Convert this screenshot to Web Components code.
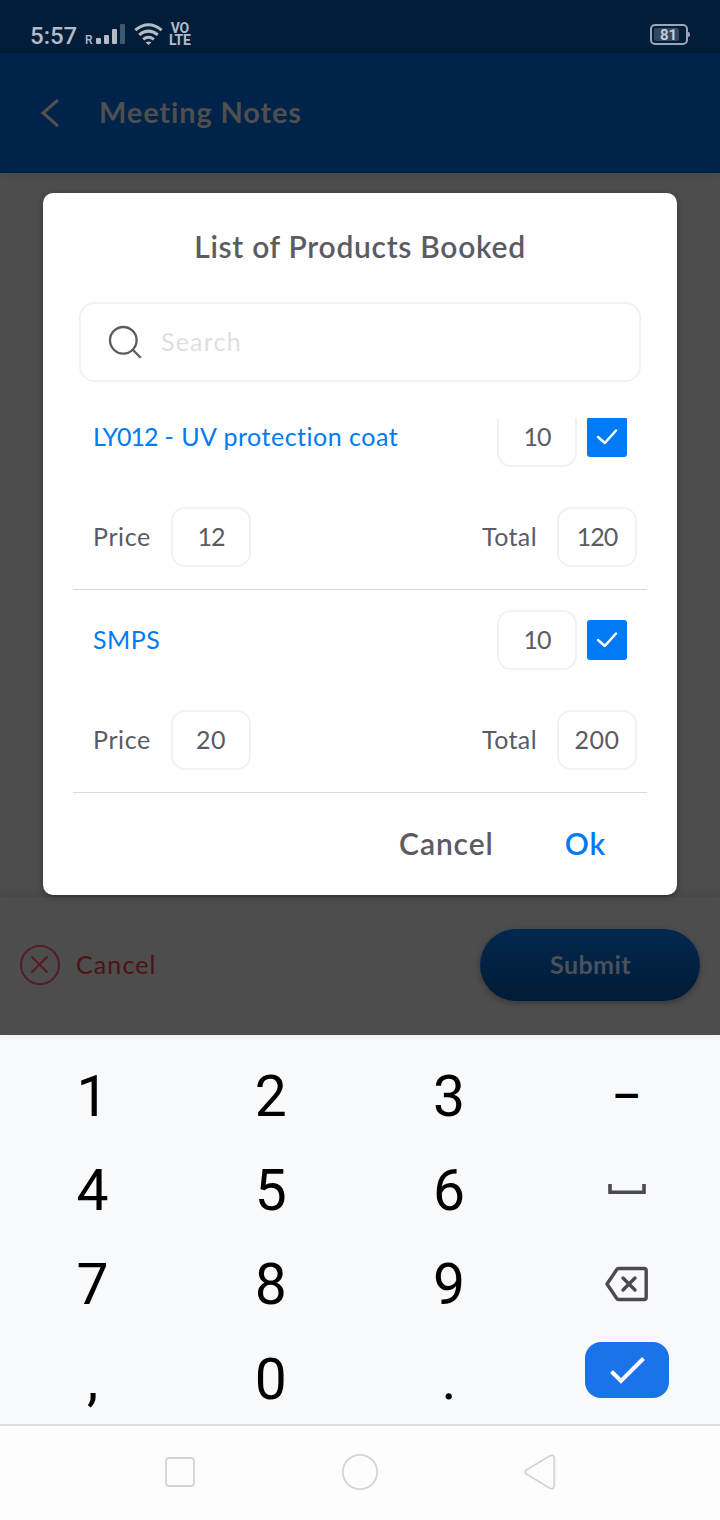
<!DOCTYPE html>
<html lang="en">
<head>
<meta charset="UTF-8">
<title>Meeting Notes</title>
<style>
  html, body {
    margin: 0;
    width: 720px;
    height: 1520px;
    overflow: hidden;
  }
  body {
    font-family: Lato, "Open Sans", sans-serif;
    --text: #5b5b64;
    --blue: #007af5;
    --line: #f2f2f3;
  }
</style>
</head>
<body>
<meeting-screen></meeting-screen>

<script>
/* shared helper : clone a template into an open shadow root */
function define(name, html) {
  const template = document.createElement('template');
  template.innerHTML = html;

  class Component extends HTMLElement {
    constructor() {
      super();
      this.attachShadow({ mode: 'open' });
      this.shadowRoot.appendChild(template.content.cloneNode(true));
    }
  }

  if (!customElements.get(name)) {
    customElements.define(name, Component);
  }
}

/* status bar : clock, signal, wifi, volte, battery */
define('status-bar', `
  <style>
    :host {
      display: flex;
      align-items: flex-start;
      justify-content: space-between;
      height: 53px;
      box-sizing: border-box;
      padding: 20px 30px 0 30px;
      background: #011d3a;
      color: #b3bbc4;
      font-family: Roboto, sans-serif;
    }
    .left { display: flex; }
    .clock { width: 55px; padding-top: 1px; font-size: 24px; line-height: 31px; font-weight: 500; }
    svg { display: block; }
    .r { width: 11px; padding-top: 13px; font-size: 12px; line-height: 14px; font-weight: 500; }
    .wifi { margin: 2px 0 0 8px; }
    .volte {
      margin: 2px 0 0 6px;
      font-size: 14px;
      line-height: 12px;
      font-weight: 700;
      text-align: center;
      letter-spacing: -0.4px;
    }
    .volte div { height: 12px; }
    .battery {
      display: flex;
      align-items: center;
      margin-top: 4px;
    }
    .cell {
      width: 38px;
      height: 21px;
      box-sizing: border-box;
      border: 2px solid #9aa6b5;
      border-radius: 5px;
      padding: 2px;
    }
    .level {
      width: 25px;
      height: 13px;
      padding-left: 6px;
      border-radius: 2px;
      background: #344960;
      font-size: 15px;
      line-height: 15px;
      font-weight: 700;
      color: #c5ccd3;
      box-sizing: border-box;
      white-space: nowrap;
    }
    .tip { width: 2px; height: 5px; background: #9aa6b5; border-radius: 0 2px 2px 0; }
  </style>
  <div class="left">
    <div class="clock">5:57</div>
    <div class="r">R</div>
    <svg width="30" height="26" viewBox="0 0 30 26">
      <g fill="#b3bbc4">
        <rect x="0" y="18" width="5" height="6" rx="1"/>
        <rect x="8" y="15" width="5" height="9" rx="1"/>
        <rect x="16" y="9" width="5" height="15" rx="1"/>
        <rect x="24" y="4" width="5" height="20" rx="1" fill="#415871"/>
      </g>
    </svg>
    <svg class="wifi" width="29" height="24" viewBox="0 0 29 24" fill="none" stroke="#b3bbc4" stroke-width="3">
      <path d="M1.3 8.2Q14.5-2.6 27.7 8.2"/>
      <path d="M5.2 12.9Q14.5 5.3 23.8 12.9"/>
      <path d="M9.1 17.4Q14.5 13.2 19.9 17.4"/>
      <path d="M14.5 23L11.6 20.4Q14.5 18.4 17.4 20.4Z" fill="#b3bbc4" stroke="none"/>
    </svg>
    <div class="volte"><div>VO</div><div>LTE</div></div>
  </div>
  <div class="battery">
    <div class="cell"><div class="level">81</div></div>
    <div class="tip"></div>
  </div>
`);

/* app header : back button + page title */
define('app-header', `
  <style>
    :host {
      display: flex;
      align-items: center;
      height: 120px;
      box-sizing: border-box;
      padding: 0 0 0 39px;
      background: #002349;
      color: #504f50;
      box-shadow: 0 1px 6px rgba(0, 0, 0, .12);
    }
    .title {
      margin: -3px 0 0 37px;
      font-size: 29px;
      line-height: 36px;
      font-weight: 700;
      letter-spacing: 0.85px;
    }
  </style>
  <svg width="23" height="30" viewBox="0 0 23 30" fill="none" stroke="#55504c" stroke-width="3">
    <path d="M19 2L4 15L19 28"/>
  </svg>
  <div class="title"><slot></slot></div>
`);

/* footer under the dialog : cancel / submit */
define('action-bar', `
  <style>
    :host {
      display: flex;
      align-items: center;
      justify-content: space-between;
      height: 138px;
      box-sizing: border-box;
      padding: 0 20px 2px;
      background: #4d4d4d;
      box-shadow: 0 -2px 10px rgba(0, 0, 0, .1);
    }
    .cancel {
      display: flex;
      align-items: center;
      gap: 16px;
      color: #4d1213;
      font-size: 25px;
      line-height: 32px;
      letter-spacing: 1.1px;
    }
    .cancel span { padding-bottom: 2px; }
    .submit {
      width: 220px;
      height: 72px;
      border-radius: 36px;
      background: linear-gradient(#03284f, #001b36);
      box-shadow: 0 2px 6px rgba(0, 0, 0, .3);
      color: #4b5159;
      font-size: 25px;
      line-height: 71px;
      font-weight: 700;
      letter-spacing: 0.4px;
      text-indent: 1px;
      text-align: center;
    }
  </style>
  <div class="cancel">
    <svg width="40" height="40" viewBox="0 0 40 40" fill="none" stroke="#561b26" stroke-width="2">
      <circle cx="20" cy="20" r="19"/>
      <path d="M12 12L27 27M27 12L12 27" stroke-linecap="round"/>
    </svg>
    <span>Cancel</span>
  </div>
  <div class="submit">Submit</div>
`);

/* search field */
define('search-box', `
  <style>
    :host {
      display: flex;
      align-items: center;
      height: 80px;
      box-sizing: border-box;
      padding-left: 26px;
      gap: 18px;
      border: 2px solid var(--line);
      border-radius: 16px;
      color: #dfdfe0;
      font-size: 25px;
      line-height: 32px;
      letter-spacing: 1.2px;
    }
    span { padding-bottom: 2px; }
  </style>
  <svg width="36" height="36" viewBox="0 0 36 36" fill="none" stroke="#5b5b64" stroke-width="2.3">
    <circle cx="16.3" cy="16.3" r="13.3"/>
    <path d="M25.5 25.5L33.7 33.7"/>
  </svg>
  <span><slot></slot></span>
`);

/* small bordered number field */
define('number-box', `
  <style>
    :host {
      display: block;
      width: 80px;
      height: 60px;
      box-sizing: border-box;
      border: 2px solid var(--line);
      border-radius: 14px;
      line-height: 55px;
      text-align: center;
    }
  </style>
  <slot></slot>
`);

/* checked checkbox */
define('check-box', `
  <style>
    :host {
      display: block;
      width: 40px;
      height: 40px;
      border-radius: 3px;
      background: var(--blue);
    }
    svg { display: block; }
  </style>
  <svg width="40" height="40" viewBox="0 0 40 40" fill="none" stroke="#fff" stroke-width="2.5" stroke-linecap="round" stroke-linejoin="round">
    <path d="M11 20L17.8 26L29 13.5"/>
  </svg>
`);

/* one product : name / quantity / checkbox, price / total */
define('product-item', `
  <style>
    :host {
      display: block;
      flex: none;
      height: 203px;
      box-sizing: border-box;
      padding-top: 20px;
      border-bottom: 1px solid #dadadb;
      color: var(--text);
      font-size: 25px;
      line-height: 32px;
      letter-spacing: 0.5px;
    }
    .row {
      display: flex;
      align-items: center;
      height: 60px;
      padding: 0 20px;
    }
    .name { flex: 1; padding-bottom: 2px; color: var(--blue); }
    check-box { margin-left: 10px; }
    .sum { margin-top: 40px; padding-right: 10px; }
    .price { width: 78px; padding-bottom: 2px; letter-spacing: 0.6px; }
    .total { margin: 0 20px 0 auto; padding-bottom: 2px; letter-spacing: 0.4px; }
  </style>
  <div class="row">
    <div class="name"><slot name="name"></slot></div>
    <number-box><slot name="qty"></slot></number-box>
    <check-box></check-box>
  </div>
  <div class="row sum">
    <div class="price">Price</div>
    <number-box><slot name="price"></slot></number-box>
    <div class="total">Total</div>
    <number-box><slot name="total"></slot></number-box>
  </div>
`);

/* dialog with the booked products, list is scrolled to its end */
define('product-dialog', `
  <style>
    :host {
      display: flex;
      flex-direction: column;
      width: 634px;
      height: 702px;
      box-sizing: border-box;
      padding: 0 30px;
      border-radius: 10px;
      background: #fff;
      box-shadow: 0 2px 6px rgba(0, 0, 0, .35);
      color: var(--text);
    }
    .title {
      padding: 35px 0 38px;
      font-size: 30px;
      line-height: 36px;
      font-weight: 600;
      letter-spacing: 0.7px;
      text-align: center;
    }
    search-box { margin: 0 6px; }
    .list {
      display: flex;
      flex-direction: column;
      justify-content: flex-end;
      height: 375px;
      margin-top: 36px;
      overflow: hidden;
    }
    .tight { letter-spacing: -1px; }
    .buttons {
      display: flex;
      justify-content: flex-end;
      gap: 71px;
      padding: 32px 41px 0 0;
      font-size: 30px;
      line-height: 36px;
      font-weight: 600;
      letter-spacing: 0.9px;
    }
    .ok { color: var(--blue); }
  </style>
  <div class="title">List of Products Booked</div>
  <search-box>Search</search-box>
  <div class="list">
    <product-item>
      <span slot="name"><span class="tight">LY012</span> - UV protection coat</span>
      <span slot="qty" class="tight">10</span>
      <span slot="price" class="tight">12</span>
      <span slot="total" class="tight">120</span>
    </product-item>
    <product-item>
      <span slot="name">SMPS</span>
      <span slot="qty" class="tight">10</span>
      <span slot="price">20</span>
      <span slot="total">200</span>
    </product-item>
  </div>
  <div class="buttons"><span>Cancel</span><span class="ok">Ok</span></div>
`);

/* numeric keyboard */
define('num-keyboard', `
  <style>
    :host {
      display: grid;
      grid-template-columns: repeat(4, 1fr);
      grid-template-rows: 94px 94px 94px 93px;
      height: 389px;
      box-sizing: border-box;
      padding: 14px 4px 0 3px;
      background: #f8f9fb;
      color: #000;
      font-family: Roboto, sans-serif;
      font-size: 57px;
      line-height: 96px;
      text-indent: 1px;
      text-align: center;
    }
    .last { padding-top: 1px; }
    .icon { display: flex; align-items: center; justify-content: center; }
    .enter {
      justify-self: center;
      width: 84px;
      height: 56px;
      margin-top: 11px;
      border-radius: 16px;
      background: #1a73e8;
    }
    svg { display: block; }
    .dash { font-size: 45px; line-height: 95px; font-weight: 500; text-indent: -1px; }
  </style>
  <div>1</div><div>2</div><div>3</div><div class="dash">–</div>
  <div>4</div><div>5</div><div>6</div>
  <div class="icon">
    <svg width="40" height="12" viewBox="0 0 40 12" fill="none" stroke="#4b4b4d" stroke-width="3.6">
      <path d="M3 0V8.2H37V0"/>
    </svg>
  </div>
  <div>7</div><div>8</div><div>9</div>
  <div class="icon">
    <svg width="44" height="36" viewBox="0 0 44 36" fill="none" stroke="#4b4b4d" stroke-width="3.4" stroke-linejoin="round">
      <path d="M13.5 2.5H39Q41.2 2.5 41.2 4.7V31.3Q41.2 33.5 39 33.5H13.5Q12.5 33.5 11.8 32.5L2 18L11.8 3.5Q12.5 2.5 13.5 2.5Z"/>
      <path d="M18 12L30 24M30 12L18 24" stroke-linecap="round"/>
    </svg>
  </div>
  <div class="last">,</div><div class="last">0</div><div class="last">.</div>
  <div class="enter">
    <svg width="84" height="56" viewBox="0 0 84 56" fill="none" stroke="#fff" stroke-width="4">
      <path d="M26.5 29.5L36 39L58.5 16.5"/>
    </svg>
  </div>
`);

/* system navigation bar */
define('nav-bar', `
  <style>
    :host {
      display: flex;
      justify-content: space-around;
      height: 96px;
      box-sizing: border-box;
      padding: 26px 90px 0;
      border-top: 2px solid #dedede;
      background: #fdfdfd;
    }
    svg { display: block; }
  </style>
  <svg width="40" height="40" viewBox="0 0 40 40" fill="none" stroke="#d4d4d4" stroke-width="1.8">
    <rect x="6" y="6" width="28" height="28" rx="3"/>
  </svg>
  <svg width="40" height="40" viewBox="0 0 40 40" fill="none" stroke="#d4d4d4" stroke-width="1.8">
    <circle cx="20" cy="20" r="17.2"/>
  </svg>
  <svg width="40" height="40" viewBox="0 0 40 40" fill="none" stroke="#d4d4d4" stroke-width="1.8">
    <path d="M6.5 18L29.5 4Q34 2 34.3 6V33.5Q34 38 29.5 36L6.5 22Q4 20 6.5 18Z"/>
  </svg>
`);

/* whole screen, the dialog lies over the dimmed page */
define('meeting-screen', `
  <style>
    :host {
      display: flex;
      flex-direction: column;
      width: 720px;
      height: 1520px;
    }
    .page {
      position: relative;
      display: flex;
      flex-direction: column;
      height: 1035px;
      background: #4d4d4d;
    }
    .content { flex: 1; }
    product-dialog {
      position: absolute;
      top: 193px;
      left: 43px;
    }
  </style>
  <div class="page">
    <status-bar></status-bar>
    <app-header>Meeting Notes</app-header>
    <div class="content"></div>
    <action-bar></action-bar>
    <product-dialog></product-dialog>
  </div>
  <num-keyboard></num-keyboard>
  <nav-bar></nav-bar>
`);
</script>
</body>
</html>
